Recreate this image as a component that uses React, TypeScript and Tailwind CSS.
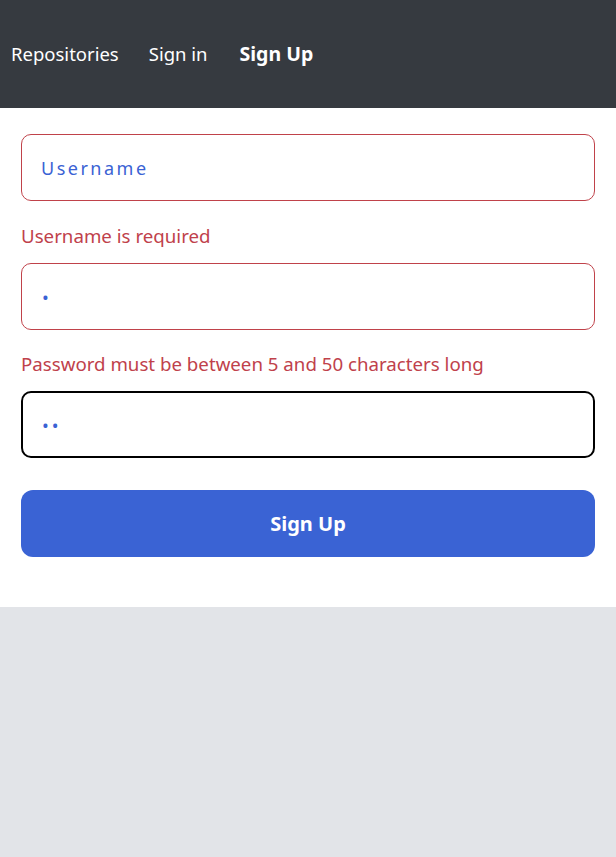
import React from "react";

export default function App() {
  const font = { fontFamily: '"Noto Sans", "Open Sans", sans-serif' };
  return (
    <div className="min-h-[857px] bg-[#e2e4e8]" style={font}>
      <nav className="h-[108px] bg-[#363a40] flex items-center px-[11px] text-white text-[18.5px]">
        <span>Repositories</span>
        <span className="ml-[30px]">Sign in</span>
        <span className="ml-[32px] font-bold text-[19.5px]">Sign Up</span>
      </nav>
      <div className="bg-white px-[21px] pt-[26px] pb-[50px]">
        <input
          className="block w-full h-[67px] rounded-[10px] border border-[#c0424a] px-[19px] text-[18px] tracking-[2.5px] text-[#3a62d4] placeholder:text-[#3a62d4] outline-none"
          placeholder="Username"
        />
        <p className="pt-[21px] pb-[14px] leading-[27px] text-[18.7px] text-[#c0414b]">Username is required</p>
        <input
          type="password"
          defaultValue="a"
          className="block w-full h-[67px] rounded-[10px] border border-[#c0424a] px-[20px] text-[18px] tracking-[3px] text-[#3a62d4] outline-none"
        />
        <p className="pt-[20px] pb-[14px] leading-[27px] text-[18.7px] text-[#c0414b]">Password must be between 5 and 50 characters long</p>
        <input
          type="password"
          defaultValue="ab"
          className="block w-full h-[67px] rounded-[10px] border-2 border-black px-[19px] text-[18px] tracking-[3px] text-[#3a62d4] outline-none"
        />
        <button className="mt-[32px] block w-full h-[67px] rounded-[12px] bg-[#3a63d4] text-white font-bold text-[20px]">
          Sign Up
        </button>
      </div>
    </div>
  );
}
